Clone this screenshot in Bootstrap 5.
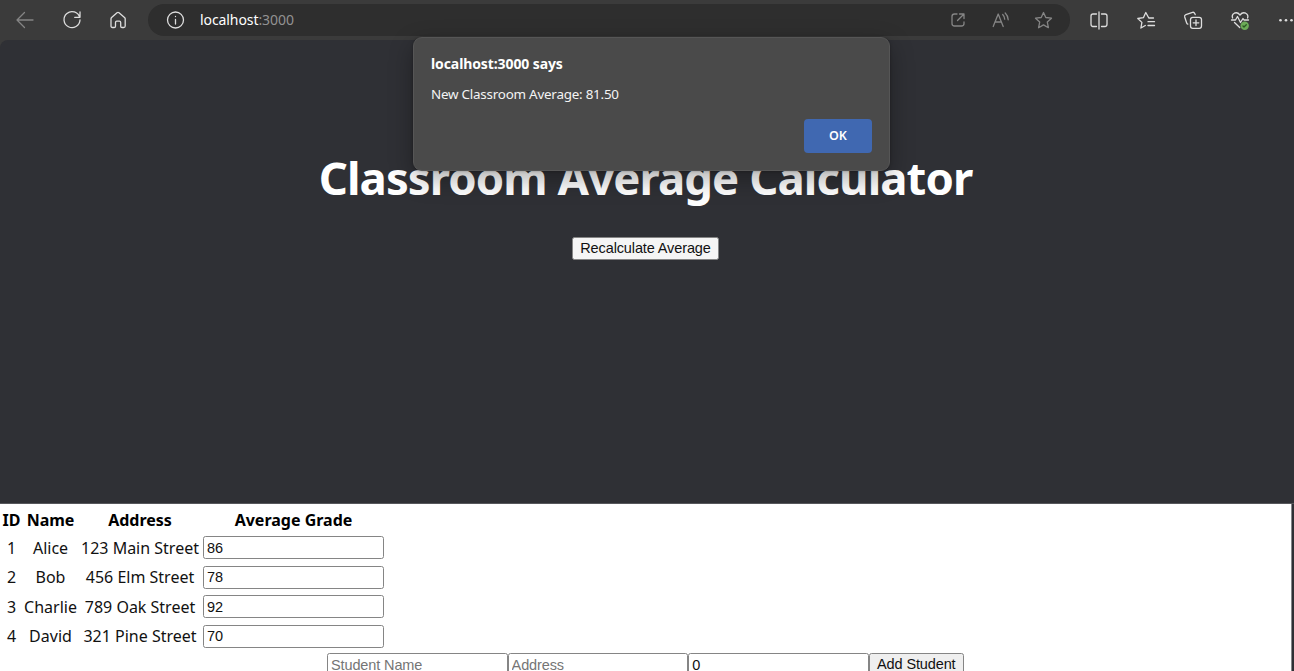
<!DOCTYPE html>
<html lang="en">
<head>
<meta charset="utf-8">
<title>Classroom Average Calculator</title>
<link rel="stylesheet" href="https://cdn.jsdelivr.net/npm/bootstrap@5.3.0/dist/css/bootstrap.min.css">
<style>
body{font-family:"Noto Sans",sans-serif;background:#3b3b3b;height:671px;overflow:hidden;color:#111}
.toolbar{height:40px;background:#3b3b3b;color:#dedede}
.toolbar svg{fill:none;stroke:currentColor;stroke-width:1.3;stroke-linecap:round;stroke-linejoin:round;width:20px;height:20px;flex:none;overflow:visible}
.browser-nav{width:148px;padding-left:15px;gap:26.5px}
.dim{color:#858585}
.address{width:922px;flex:none;height:32px;margin-top:4px;background:#2e2e2e;padding:0 16px 0 18px}
.url{font-size:14px;letter-spacing:-.08px;color:#fff;margin-left:14px;margin-top:-1px}
.url span{color:#929292}
.address-tools{gap:23px}
.browser-tools{padding-left:19px;gap:27px}
.page{height:631px;background:#2f3035;border-radius:8px 0 0 0;overflow:hidden}
.hero{height:464px;padding-top:104px;border-bottom:1px solid #56575b}
.hero h1{font-size:45.5px;line-height:66px;font-weight:700;color:#fff;margin:0 0 27px;letter-spacing:-.93px;white-space:nowrap}
.hero h1,.hero .native{margin-right:3px}
.native,.field{font-family:"Liberation Sans",Arial,sans-serif;font-size:14.5px;letter-spacing:-.12px;line-height:18px;color:#111;border:1px solid #858585;border-radius:2.5px}
.native{background:#efefef;height:23px;padding:0 5px 2px;white-space:nowrap}
.hero .native{background:#f5f5f5;width:147px}
.field{width:181px;height:23px;padding:1px 3px;background:#fff;display:block}
.field::placeholder{color:#757575}
.sheet{width:1292px;height:167px;background:#fff;border-right:1px solid #85868a}
.grades{width:385px;table-layout:fixed;border-collapse:collapse;text-align:center;font-size:16px;line-height:22px;white-space:nowrap}
.grades th,.grades td{padding:0;text-align:center;vertical-align:middle}
.grades th{height:29px;padding-top:3px;color:#000}
.grades td{height:29.5px}
.grades .field{margin:0 0 0 1px}
.new-student{margin-left:327px;margin-top:2px}
.new-student .field{width:180.6px}
.new-student .native{width:95px}
.alert-box{position:absolute;left:413px;top:37px;width:477px;height:134px;background:#4a4a4a;border:1px solid #565656;border-radius:9px;box-shadow:0 8px 24px rgba(0,0,0,.32),0 0 3px rgba(0,0,0,.3);padding:16px 17px;color:#fff;font-size:13.4px;letter-spacing:-.22px;line-height:20px}
.alert-box strong{font-size:14px;letter-spacing:-.1px}
.alert-box p{margin:10px 0 14px;color:#f4f4f4}
.ok{width:68px;height:34px;background:#4068b1;border:0;border-radius:4px;color:#fff;font-weight:600;font-size:12.5px;margin-top:1px}
</style>
</head>
<body>
<header class="toolbar d-flex">
  <nav class="browser-nav d-flex align-items-center flex-shrink-0">
    <svg class="dim" viewBox="0 0 20 20"><path d="M18 10H2M9.500 2.500L2 10l7.500 7.500"/></svg>
    <svg viewBox="0 0 20 20"><path d="M17.700 7.400A8 8 0 1 0 18 10M18 2v5.300h-5.300"/></svg>
    <svg viewBox="0 0 20 20"><path d="M3 8.800Q3 8.100 3.600 7.500L9 2.700Q10 1.900 11 2.700L16.500 7.500Q17.200 8.100 17.200 8.800V16Q17.200 17.500 15.700 17.500H14Q12.700 17.500 12.700 16.200V12.500Q12.700 11.200 11.400 11.200H8.800Q7.500 11.200 7.500 12.500V16.200Q7.500 17.500 6.200 17.500H4.500Q3 17.500 3 16Z"/></svg>
  </nav>
  <div class="address rounded-pill d-flex align-items-center">
    <svg viewBox="0 0 20 20"><circle cx="9.500" cy="10" r="8"/><path d="M9.500 9.500v4.500M9.500 6.300v.2"/></svg>
    <div class="url">localhost<span>:3000</span></div>
    <div class="address-tools dim d-flex ms-auto">
      <svg viewBox="0 0 20 20"><path d="M9 4H6.500Q4 4 4 6.500v7Q4 16 6.500 16h7Q16 16 16 13.500V12M11.500 4H16v4.500M16 4L9.500 10.500"/></svg>
      <svg viewBox="0 0 20 20"><path d="M2.200 16.500L7.200 4l5 12.500M4 12h6.400M11.700 4.500q2 2 2 4.700M14.200 3q3 3 3 6.800" /></svg>
      <svg viewBox="0 0 20 20"><path d="M9.500 2.500l2.300 5 5.700.7-4.200 3.900 1.100 5.600-4.900-2.800-4.900 2.800 1.100-5.600L1.500 8.200l5.700-.7z"/></svg>
    </div>
  </div>
  <nav class="browser-tools d-flex align-items-center">
    <svg viewBox="0 0 20 20"><path d="M10 2v17M7.500 4H4Q2 4 2 6v8q0 2.500 2 2.500h3.500M12.500 4H16q2 0 2 2v8q0 2.500-2 2.500h-3.500"/></svg>
    <svg viewBox="0 0 20 20"><path d="M17.500 8h-4.700L9.800 2.500 7.400 7.700l-5.600.8 4.100 3.900-1 5.600 4.400-2.500M12 11.700h6.500M12 15.500h6.500"/></svg>
    <svg viewBox="0 0 20 20"><rect x="7.500" y="7.300" width="11" height="11" rx="2.300"/><path d="M13 10v5.600M10.200 12.800h5.600M4.800 14.200Q4 14 3.600 12.700L1.700 7q-.5-1.700 1.200-2.300L9.500 2.400q1.500-.5 2.200 1l.5 1.200"/></svg>
    <svg viewBox="0 0 20 20"><path d="M2.600 8Q1.400 4.800 4.300 3.200 7.500 1.800 10 5q2.500-3.200 5.700-1.800Q18.700 4.800 17.600 8M1.500 10h4l2-3.500 3 6L13 8.500l1 1.500h4.500M4.500 12.500l5.200 5"/><circle cx="14.700" cy="15.800" r="4.200" fill="#6cab58" stroke="none"/><path d="M13 16l1 1 2.300-2.300" stroke="#2b5923"/></svg>
    <svg viewBox="0 0 20 20"><g fill="currentColor" stroke="none"><circle cx="3.500" cy="10.300" r="1.300"/><circle cx="9" cy="10.300" r="1.300"/><circle cx="14.500" cy="10.300" r="1.300"/></g></svg>
  </nav>
</header>
<main class="page">
  <section class="hero d-flex flex-column align-items-center">
    <h1>Classroom Average Calculator</h1>
    <button class="native">Recalculate Average</button>
  </section>
  <section class="sheet">
    <table class="grades">
      <colgroup><col style="width:23px"><col style="width:55px"><col style="width:124px"><col style="width:183px"></colgroup>
      <thead><tr><th>ID</th><th>Name</th><th>Address</th><th>Average Grade</th></tr></thead>
      <tbody>
        <tr><td>1</td><td>Alice</td><td>123 Main Street</td><td><input class="field" value="86"></td></tr>
        <tr><td>2</td><td>Bob</td><td>456 Elm Street</td><td><input class="field" value="78"></td></tr>
        <tr><td>3</td><td>Charlie</td><td>789 Oak Street</td><td><input class="field" value="92"></td></tr>
        <tr><td>4</td><td>David</td><td>321 Pine Street</td><td><input class="field" value="70"></td></tr>
      </tbody>
    </table>
    <form class="new-student d-flex">
      <input class="field" placeholder="Student Name"><input class="field" placeholder="Address"><input class="field" value="0"><button type="button" class="native">Add Student</button>
    </form>
  </section>
</main>
<div class="alert-box d-flex flex-column" role="dialog">
  <strong>localhost:3000 says</strong>
  <p>New Classroom Average: 81.50</p>
  <button class="ok align-self-end">OK</button>
</div>
<script src="https://cdn.jsdelivr.net/npm/bootstrap@5.3.0/dist/js/bootstrap.bundle.min.js"></script>
</body>
</html>
